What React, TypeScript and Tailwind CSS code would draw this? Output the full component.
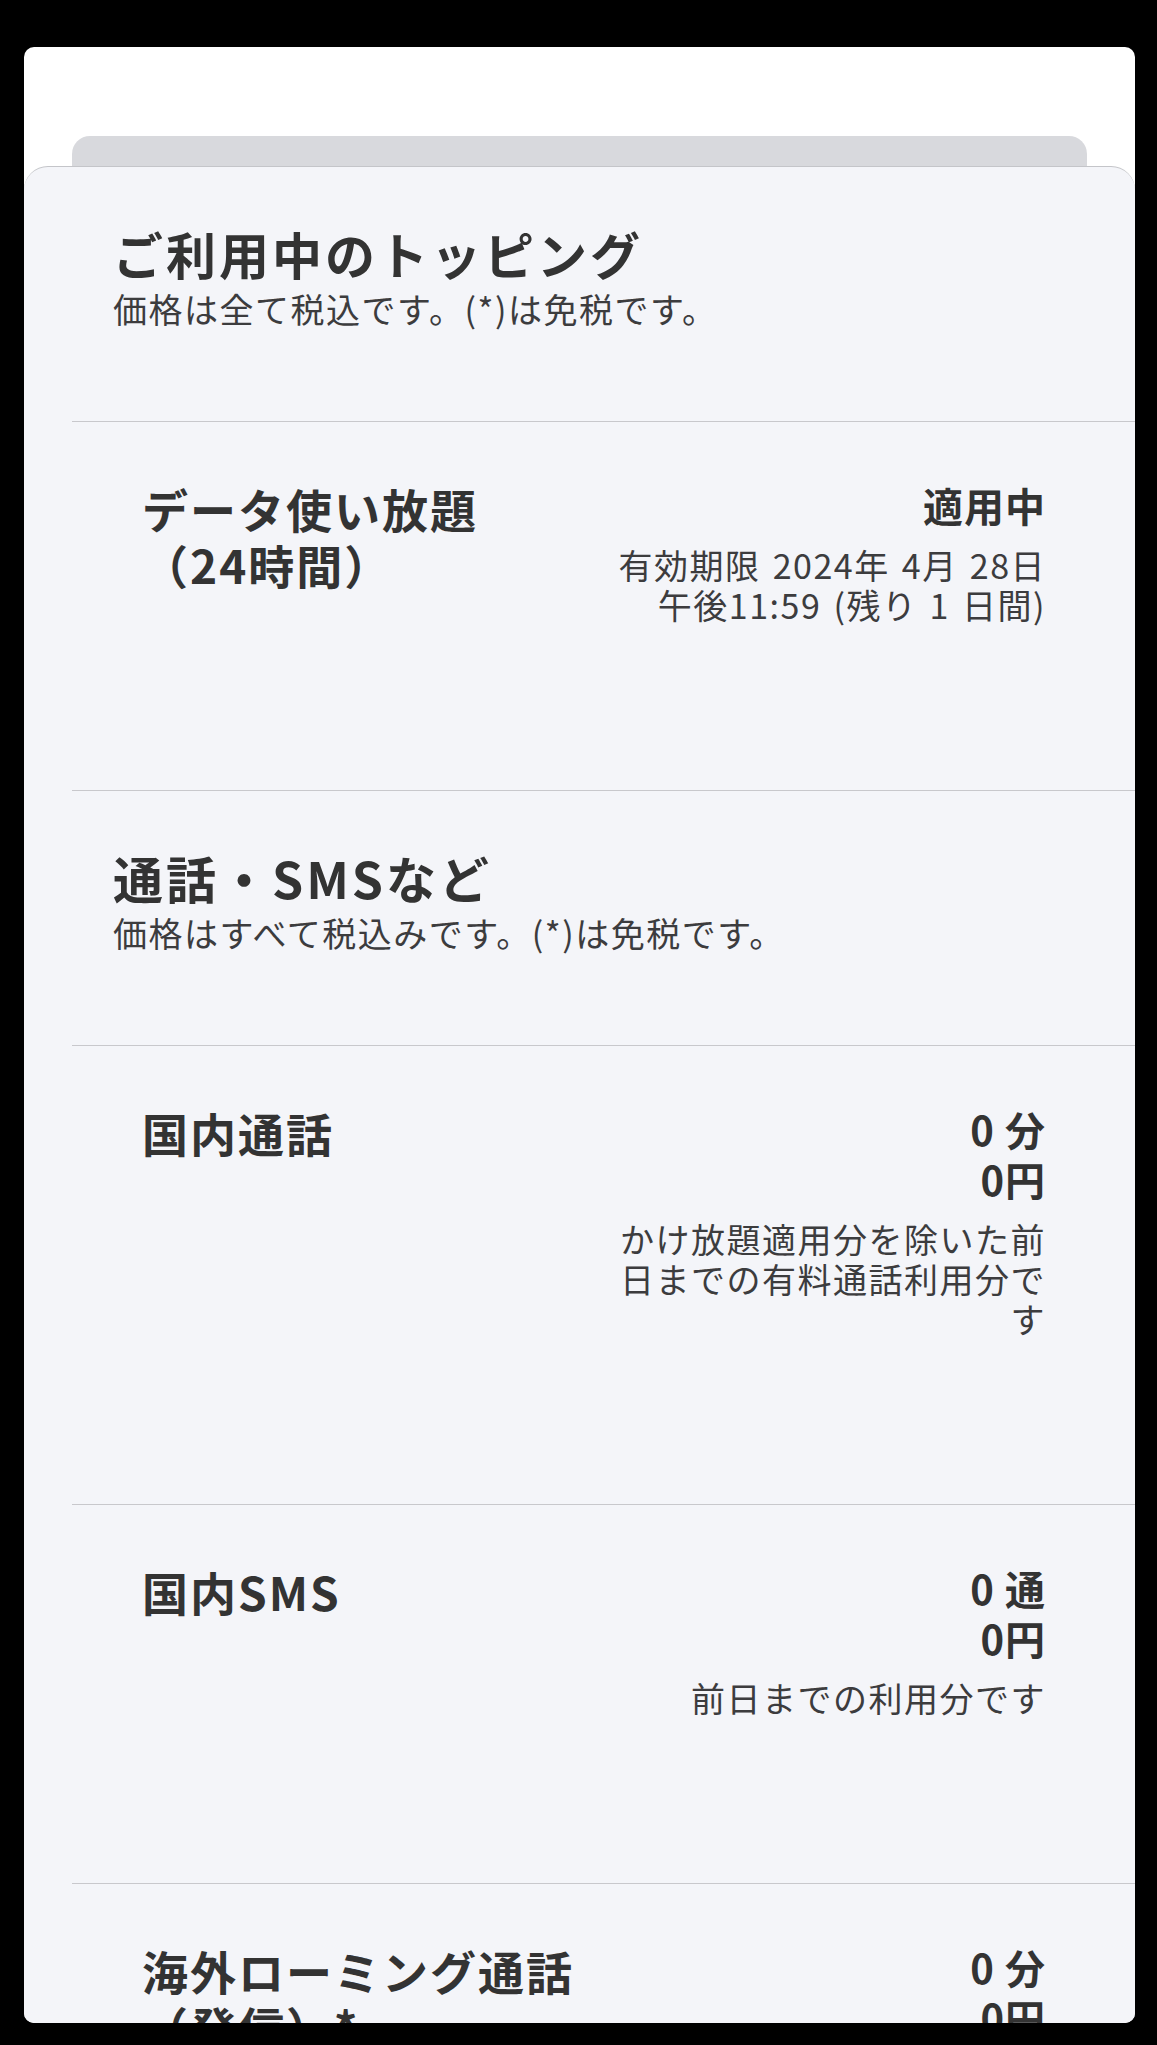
import React from "react"

type Row = {
  title: string[]
  values: string[]
  note?: string
  noteLines?: string[]
}

const toppings: Row[] = [
  {
    title: ["データ使い放題", "（24時間）"],
    values: ["適用中"],
    noteLines: ["有効期限 2024年 4月 28日", "午後11:59 (残り 1 日間)"],
  },
]

const calls: Row[] = [
  {
    title: ["国内通話"],
    values: ["0 分", "0円"],
    note: "かけ放題適用分を除いた前日までの有料通話利用分です",
  },
  {
    title: ["国内SMS"],
    values: ["0 通", "0円"],
    note: "前日までの利用分です",
  },
  {
    title: ["海外ローミング通話", "（発信）*"],
    values: ["0 分", "0円"],
    note: "前日までの利用分です",
  },
]

function SectionHeader({ title, sub }: { title: string; sub: string }) {
  return (
    <div className="pl-[89px] pt-[56px] pb-[92px]">
      <h2 className="text-[50px] leading-[60px] font-bold tracking-[3px] text-[#333333]">{title}</h2>
      <p className="mt-[6px] text-[34px] leading-[40px] tracking-[1.5px] text-[#3c3c3e]">{sub}</p>
    </div>
  )
}

function Divider() {
  return <div className="ml-[48px] h-px bg-[#c8c8cc]" />
}

function UsageRow({ row }: { row: Row }) {
  return (
    <div className="flex justify-between pl-[118px] pr-[89px] pt-[58px] pb-[165px]">
      <div className="text-[46px] leading-[56px] font-bold tracking-[2px] text-[#333333] whitespace-nowrap">
        {row.title.map((t) => (
          <div key={t}>{t}</div>
        ))}
      </div>
      <div className="w-[438px] text-right">
        <div className="text-[40px] leading-[50px] font-bold tracking-[1px] text-[#333333]">
          {row.values.map((v) => (
            <div key={v}>{v}</div>
          ))}
        </div>
        <div className="mt-[15px] text-[34px] leading-[40px] tracking-[1.5px] [word-spacing:3px] text-[#3c3c3e]">
          {row.noteLines ? row.noteLines.map((n) => <div key={n}>{n}</div>) : row.note}
        </div>
      </div>
    </div>
  )
}

export default function App() {
  return (
    <div className="min-h-screen bg-black pt-[47px] pl-[24px] pr-[22px] font-['Noto_Sans_CJK_JP','Noto_Sans',sans-serif]">
      <div className="h-[1976px] bg-white rounded-[10px] overflow-hidden flex flex-col pt-[89px]">
        {/* sheet behind */}
        <div className="mx-[48px] h-[30px] shrink-0 bg-[#d8d9dd] rounded-t-[18px]" />

        {/* front sheet */}
        <div className="flex-1 bg-[#f4f5f9] rounded-t-[24px] border-t border-[#c4c5c9]">
          <SectionHeader title="ご利用中のトッピング" sub="価格は全て税込です。(*)は免税です。" />
          <Divider />
          {toppings.map((r) => (
            <React.Fragment key={r.title[0]}>
              <UsageRow row={r} />
              <Divider />
            </React.Fragment>
          ))}

          <SectionHeader title="通話・SMSなど" sub="価格はすべて税込みです。(*)は免税です。" />
          <Divider />
          {calls.map((r) => (
            <React.Fragment key={r.title[0]}>
              <UsageRow row={r} />
              <Divider />
            </React.Fragment>
          ))}
        </div>
      </div>
    </div>
  )
}
